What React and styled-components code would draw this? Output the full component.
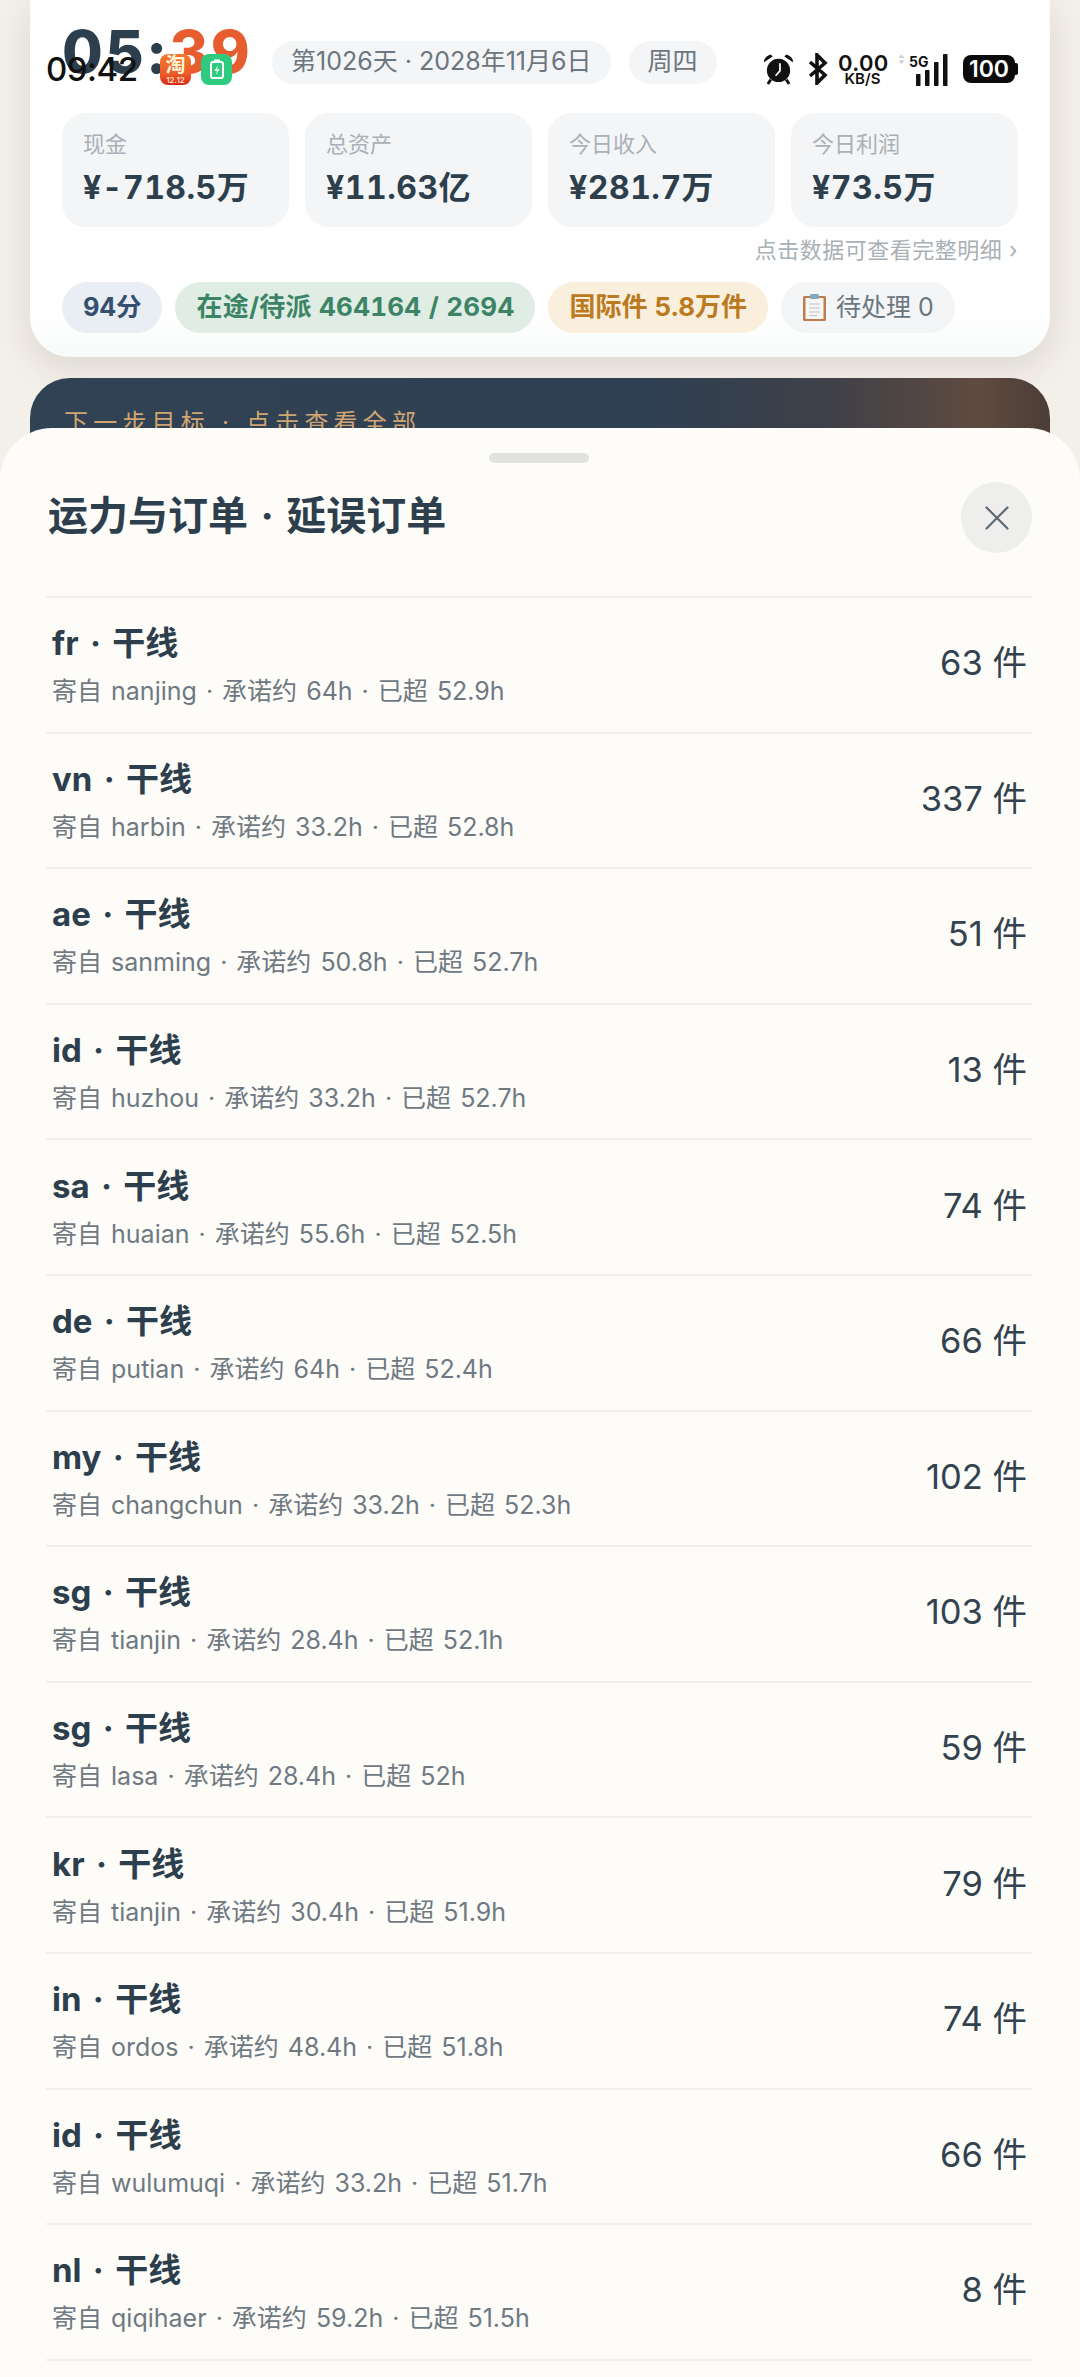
import React from "react"
import styled, { createGlobalStyle } from "styled-components"

const GlobalStyle = createGlobalStyle`
  html, body {
    margin: 0;
    padding: 0;
    height: 2377px;
    overflow: hidden;
    background: #f1ede7;
    font-family: Inter, "Noto Sans CJK SC", sans-serif;
  }
`

const orders = [
  ["fr", "nanjing", "64h", "52.9h", "63"],
  ["vn", "harbin", "33.2h", "52.8h", "337"],
  ["ae", "sanming", "50.8h", "52.7h", "51"],
  ["id", "huzhou", "33.2h", "52.7h", "13"],
  ["sa", "huaian", "55.6h", "52.5h", "74"],
  ["de", "putian", "64h", "52.4h", "66"],
  ["my", "changchun", "33.2h", "52.3h", "102"],
  ["sg", "tianjin", "28.4h", "52.1h", "103"],
  ["sg", "lasa", "28.4h", "52h", "59"],
  ["kr", "tianjin", "30.4h", "51.9h", "79"],
  ["in", "ordos", "48.4h", "51.8h", "74"],
  ["id", "wulumuqi", "33.2h", "51.7h", "66"],
  ["nl", "qiqihaer", "59.2h", "51.5h", "8"],
]

const stats = [
  ["现金", "¥-718.5万"],
  ["总资产", "¥11.63亿"],
  ["今日收入", "¥281.7万"],
  ["今日利润", "¥73.5万"],
]

const Page = styled.div`
  position: relative;
  width: 1080px;
  height: 2377px;
  overflow: hidden;
  background: #f3efe9;
  padding: 0 30px;
  box-sizing: border-box;
`

const TopCard = styled.div`
  height: 357px;
  background: linear-gradient(180deg, #fff 0%, #fff 88%, #f8fafa 100%);
  border-radius: 0 0 40px 40px;
  box-shadow: 0 10px 34px rgba(60, 55, 40, 0.13);
  padding: 26px 32px 0;
  box-sizing: border-box;
`

const ClockRow = styled.div`
  display: flex;
  align-items: flex-end;
  height: 58px;
`

const Clock = styled.div`
  font-size: 59px;
  line-height: 58px;
  font-weight: 800;
  color: #2d3e4c;
  width: 210px;
  letter-spacing: 2.5px;
  margin-bottom: 3px;
  span {
    color: #e85d2f;
  }
`

const HeadPill = styled.div`
  height: 43px;
  padding: 0 19px;
  margin-right: 18px;
  border-radius: 22px;
  background: #f3f5f6;
  color: #6b7680;
  font-size: 25px;
  line-height: 41px;
  white-space: nowrap;
`

const StatGrid = styled.div`
  display: grid;
  grid-template-columns: repeat(4, 227px);
  column-gap: 16px;
  margin-top: 29px;
`

const Stat = styled.div`
  height: 114px;
  border-radius: 24px;
  background: #f3f5f6;
  padding: 16px 21px 0;
  box-sizing: border-box;
`

const StatLabel = styled.div`
  font-size: 22px;
  line-height: 30px;
  color: #a9b0b6;
`

const StatValue = styled.div`
  font-size: 32px;
  line-height: 40px;
  margin-top: 9px;
  font-weight: 700;
  font-variant-numeric: tabular-nums;
  color: #2d3e4c;
  letter-spacing: 0.5px;
  white-space: nowrap;
`

const HintRow = styled.div`
  text-align: right;
  font-size: 22px;
  line-height: 30px;
  margin-top: 8px;
  letter-spacing: 0.5px;
  color: #a9b0b6;
`

const PillRow = styled.div`
  display: flex;
  gap: 13px;
  margin-top: 17px;
`

const Pill = styled.div`
  display: flex;
  align-items: center;
  gap: 9px;
  height: 49px;
  padding: 0 21px 2px;
  border-radius: 26px;
  font-size: ${props => props.$size || 26}px;
  line-height: 34px;
  letter-spacing: ${props => props.$spacing || 0}px;
  font-weight: ${props => props.$weight || 700};
  font-variant-numeric: tabular-nums;
  color: ${props => props.$color};
  background: ${props => props.$bg};
  white-space: nowrap;
`

const Banner = styled.div`
  margin-top: 21px;
  height: 200px;
  border-radius: 40px 40px 0 0;
  padding: 28px 34px 0;
  box-sizing: border-box;
  background: linear-gradient(90deg, #304254 0%, #2f4053 60%, #3e4048 78%, #5f4b40 93%, #4c3d37 100%);
  color: #d0a571;
  font-size: 24px;
  line-height: 34px;
  letter-spacing: 5.2px;
`

const StatusBar = styled.div`
  position: absolute;
  top: 49px;
  left: 46px;
  right: 62px;
  height: 40px;
  display: flex;
  align-items: center;
  color: #111;
`

const StatusTime = styled.div`
  font-size: 33px;
  font-weight: 500;
  line-height: 40px;
  width: 114px;
  letter-spacing: -0.5px;
`

const AppIcon = styled.div`
  width: 31px;
  height: 31px;
  border-radius: 8px;
  margin-right: 10px;
  display: flex;
  flex-direction: column;
  align-items: center;
  justify-content: center;
  overflow: hidden;
  background: ${props => props.$bg};
`

const TaobaoGlyph = styled.span`
  color: #fff6d8;
  font-size: 20px;
  font-weight: 700;
  line-height: 22px;
`

const TaobaoDate = styled.span`
  color: #ffe6c0;
  font-size: 8px;
  font-weight: 600;
  line-height: 8px;
`

const StatusRight = styled.div`
  margin-left: auto;
  display: flex;
  align-items: center;
`

const NetSpeed = styled.div`
  width: 49px;
  margin: 0 11px 0 10px;
  text-align: center;
  font-weight: 600;
  font-size: 22px;
  line-height: 19px;
  letter-spacing: 0.3px;
  white-space: nowrap;
  small {
    display: block;
    font-size: 15px;
    line-height: 12px;
    letter-spacing: 0;
  }
`

const Battery = styled.div`
  width: 52px;
  height: 28px;
  margin: 0 3px 0 15px;
  border-radius: 8px;
  background: #0b0b0b;
  color: #fff;
  font-size: 23px;
  font-weight: 600;
  line-height: 28px;
  text-align: center;
  position: relative;
  &::after {
    content: "";
    position: absolute;
    top: 8px;
    right: -3px;
    width: 3px;
    height: 12px;
    border-radius: 0 2px 2px 0;
    background: #0b0b0b;
  }
`

const Sheet = styled.div`
  position: absolute;
  top: 428px;
  left: 0;
  right: 0;
  bottom: 0;
  background: #fdfcf8;
  border-radius: 52px 52px 0 0;
  padding: 25px 48px 0 46px;
  box-sizing: border-box;
`

const Grabber = styled.div`
  width: 100px;
  height: 10px;
  border-radius: 5px;
  margin: 0 auto;
  background: #e2e2e1;
`

const SheetHead = styled.div`
  display: flex;
  align-items: center;
  justify-content: space-between;
  height: 71px;
  margin: 19px 0 0;
`

const SheetTitle = styled.div`
  margin: 0 0 3px 2px;
  font-size: 40px;
  line-height: 56px;
  font-weight: 700;
  word-spacing: 3px;
  color: #2d3e4c;
`

const CloseButton = styled.div`
  width: 71px;
  height: 71px;
  border-radius: 50%;
  background: #eeeeec;
  display: flex;
  align-items: center;
  justify-content: center;
`

const List = styled.div`
  margin-top: 43px;
  border-top: 2px solid #f1f0ec;
`

const Row = styled.div`
  height: 135.6px;
  box-sizing: border-box;
  border-bottom: 2px solid #f1f0ec;
  display: flex;
  align-items: center;
  justify-content: space-between;
  padding: 0 5px 0 6px;
`

const RowText = styled.div`
  padding-top: 1px;
`

const RowTitle = styled.div`
  font-size: 33px;
  line-height: 44px;
  font-weight: 700;
  word-spacing: 3.5px;
  color: #2d3e4c;
`

const RowSub = styled.div`
  margin-top: 8px;
  font-size: 25px;
  line-height: 36px;
  word-spacing: 2px;
  color: #6f7982;
`

const RowCount = styled.div`
  font-size: 34.5px;
  line-height: 40px;
  margin-bottom: 3px;
  color: #33424f;
`

const AlarmIcon = () => (
  <svg width="31" height="32" viewBox="0 0 32 32">
    <circle cx="16" cy="17.5" r="12" fill="#111" />
    <path d="M1 9 Q1 3 8 1 L10 3 Z M31 9 Q31 3 24 1 L22 3 Z" fill="#111" />
    <path d="M8 27 L5 31.5 M24 27 L27 31.5" stroke="#111" strokeWidth="3" />
    <path d="M17.5 10 V18 L13 23" stroke="#fff" strokeWidth="1.8" fill="none" />
  </svg>
)

const BluetoothIcon = () => (
  <svg width="20" height="32" viewBox="0 0 20 32" style={{ marginLeft: 14 }}>
    <path d="M2 9 L17 22 L9 30 V2 L17 10 L2 23" stroke="#111" strokeWidth="3.6" fill="none" />
  </svg>
)

const SignalIcon = () => (
  <svg width="50" height="34" viewBox="0 0 50 34">
    <path d="M0.5 6 L3.5 2.5 L6.5 6 Z M0.5 8.5 L3.5 12 L6.5 8.5 Z" fill="#cfcfcf" />
    <text x="11" y="15" fontSize="14" fontWeight="700" fontFamily="Inter" fill="#111">5G</text>
    <rect x="18" y="22" width="4.5" height="12" rx="0.8" fill="#111" />
    <rect x="27" y="18" width="4.5" height="16" rx="0.8" fill="#111" />
    <rect x="36" y="10" width="4.5" height="24" rx="0.8" fill="#111" />
    <rect x="45" y="2" width="4.5" height="32" rx="0.8" fill="#111" />
  </svg>
)

const ClipboardIcon = () => (
  <svg width="25" height="28" viewBox="0 0 25 28">
    <rect x="1" y="3" width="23" height="25" rx="1.5" fill="#c07a4c" />
    <rect x="3.5" y="5" width="18" height="21" fill="#f6f6f3" />
    <path d="M7 11 H18 M7 15 H18 M7 19 H18 M7 22.5 H15" stroke="#bcc4c8" strokeWidth="1.2" />
    <rect x="8" y="1" width="9" height="5" rx="1.5" fill="#7fa9bd" />
  </svg>
)

const App = () => {
  return (
    <Page>
      <GlobalStyle />
      <TopCard>
        <ClockRow>
          <Clock>
            05:<span>39</span>
          </Clock>
          <HeadPill>第1026天 · 2028年11月6日</HeadPill>
          <HeadPill>周四</HeadPill>
        </ClockRow>
        <StatGrid>
          {stats.map(([label, value]) => (
            <Stat key={label}>
              <StatLabel>{label}</StatLabel>
              <StatValue>{value}</StatValue>
            </Stat>
          ))}
        </StatGrid>
        <HintRow>点击数据可查看完整明细 ›</HintRow>
        <PillRow>
          <Pill $color="#34506e" $bg="#e9eef4" $size={25.5}>94分</Pill>
          <Pill $color="#3c8465" $bg="#dfede4" $spacing={0.25}>在途/待派 464164 / 2694</Pill>
          <Pill $color="#bb7a1f" $bg="#f9efdc">国际件 5.8万件</Pill>
          <Pill $color="#6b7680" $bg="#f3f5f6" $weight={400} $size={25}>
            <ClipboardIcon />
            待处理 0
          </Pill>
        </PillRow>
      </TopCard>
      <Banner>下一步目标 · 点击查看全部</Banner>

      <StatusBar>
        <StatusTime>09:42</StatusTime>
        <AppIcon $bg="linear-gradient(180deg, #f4792f 0%, #ee5a28 65%, #d9251a 100%)">
          <TaobaoGlyph>淘</TaobaoGlyph>
          <TaobaoDate>12.12</TaobaoDate>
        </AppIcon>
        <AppIcon $bg="#2ecb7f">
          <svg width="16" height="20" viewBox="0 0 16 20">
            <rect x="2" y="3" width="12" height="16" rx="2" fill="none" stroke="#fff" strokeWidth="2" />
            <rect x="5" y="0.5" width="6" height="2.5" fill="#fff" />
            <path d="M9 6 L5.5 12 H8 L7 16 L10.5 10 H8 Z" fill="#fff" />
          </svg>
        </AppIcon>
        <StatusRight>
          <AlarmIcon />
          <BluetoothIcon />
          <NetSpeed>
            0.00
            <small>KB/S</small>
          </NetSpeed>
          <SignalIcon />
          <Battery>100</Battery>
        </StatusRight>
      </StatusBar>

      <Sheet>
        <Grabber />
        <SheetHead>
          <SheetTitle>运力与订单 · 延误订单</SheetTitle>
          <CloseButton>
            <svg width="26" height="26" viewBox="0 0 26 26">
              <path d="M2.5 2.5 L23.5 23.5 M23.5 2.5 L2.5 23.5" stroke="#5e6b75" strokeWidth="2.2" strokeLinecap="round" />
            </svg>
          </CloseButton>
        </SheetHead>
        <List>
          {orders.map(([code, city, promise, over, count], i) => (
            <Row key={i}>
              <RowText>
                <RowTitle>{code} · 干线</RowTitle>
                <RowSub>
                  寄自 {city} · 承诺约 {promise} · 已超 {over}
                </RowSub>
              </RowText>
              <RowCount>{count} 件</RowCount>
            </Row>
          ))}
        </List>
      </Sheet>
    </Page>
  )
}

export default App
